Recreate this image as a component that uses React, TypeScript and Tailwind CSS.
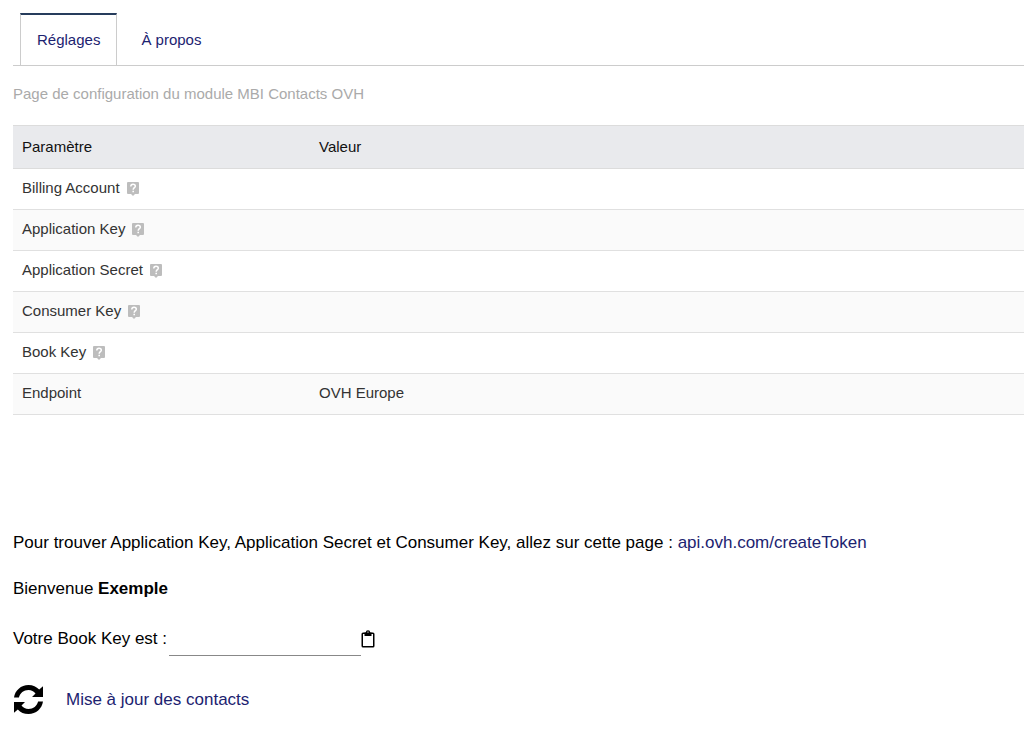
import React from "react";

interface Setting {
  label: string;
  help?: boolean;
  value?: string;
}

const settings: Setting[] = [
  { label: "Billing Account", help: true },
  { label: "Application Key", help: true },
  { label: "Application Secret", help: true },
  { label: "Consumer Key", help: true },
  { label: "Book Key", help: true },
  { label: "Endpoint", value: "OVH Europe" },
];

export default function App() {
  return (
    <div className="bg-white pt-[13px] pb-8 pl-[13px] font-['Liberation_Sans',Arial,sans-serif] text-black">
      <nav className="flex border-b border-[#ccc] pl-[7px] text-[15px] leading-5 text-[#1c2370]">
        <a
          href="#reglages"
          aria-current="page"
          className="border-x border-t-2 border-x-[#ccc] border-t-[#263c5c] px-4 pt-[15px] pb-[15px]"
        >
          Réglages
        </a>
        <a href="#apropos" className="px-6 pt-[17px] pb-[15px]">
          À propos
        </a>
      </nav>

      <p className="mt-[18px] text-[15px] leading-5 text-[#aaa]">
        Page de configuration du module MBI Contacts OVH
      </p>

      <table className="mt-[21px] w-full table-fixed border-collapse text-left text-[15px] leading-5 text-[#333]">
        <thead>
          <tr className="h-[43px] border-y border-[#dcdcdc] bg-[#e9eaed] text-[#111]">
            <th className="w-[296px] px-[9px] font-normal">Paramètre</th>
            <th className="px-[10px] font-normal">Valeur</th>
          </tr>
        </thead>
        <tbody>
          {settings.map((setting) => (
            <tr key={setting.label} className="h-[41px] border-b border-[#e0e0e0] even:bg-[#fafafa]">
              <td className="px-[9px] pb-[2px]">
                <span className="flex items-center gap-[7px]">
                  {setting.label}
                  {setting.help && <HelpIcon />}
                </span>
              </td>
              <td className="px-[10px] pb-[2px]">{setting.value}</td>
            </tr>
          ))}
        </tbody>
      </table>

      <section className="mt-[118px] text-[17px] leading-5">
        <p>
          Pour trouver Application Key, Application Secret et Consumer Key, allez sur cette page :{" "}
          <a href="https://api.ovh.com/createToken" className="text-[#1c2370]">
            api.ovh.com/createToken
          </a>
        </p>
        <p className="mt-[26px]">
          Bienvenue <b>Exemple</b>
        </p>
        <div className="mt-[23px] flex items-center">
          <label htmlFor="bookKey">Votre Book Key est :</label>
          <input
            id="bookKey"
            type="text"
            className="ml-[2px] h-[34px] w-48 border-b border-[#888] bg-transparent outline-none"
          />
          <button type="button" aria-label="Copier">
            <ClipboardIcon />
          </button>
        </div>
        <a href="#update" className="mt-7 flex w-fit items-center gap-[22px] text-[#1c2370]">
          <RefreshIcon />
          Mise à jour des contacts
        </a>
      </section>
    </div>
  );
}

const HelpIcon = () => {
  return (
    <svg
      xmlns="http://www.w3.org/2000/svg"
      width="12"
      height="14"
      viewBox="0 0 12 14"
      fill="none"
      className="mt-[2px]"
    >
      <path d="M1 0h10a1 1 0 0 1 1 1v10a1 1 0 0 1-1 1H8l-2 2-2-2H1a1 1 0 0 1-1-1V1a1 1 0 0 1 1-1z" fill="#bdbdbd" />
      <path d="M3.800 4.500C3.800 3 4.700 2.300 6 2.300s2.300.7 2.300 1.900C8.300 5.600 6.200 5.800 6.200 7.700" stroke="#fff" strokeWidth="1.500" />
      <path d="M5.400 8.700H7v1.600H5.400z" fill="#fff" />
    </svg>
  );
};

const ClipboardIcon = () => {
  return (
    <svg xmlns="http://www.w3.org/2000/svg" width="14" height="18" viewBox="0 0 14 18" fill="none">
      <rect x="1.250" y="3.250" width="11.500" height="13.500" rx="0.8" stroke="#000" strokeWidth="1.500" />
      <path
        fill="#000"
        fillRule="evenodd"
        d="M3.500 2.500h1.300a2.200 2.200 0 0 1 4.400 0h1.300V6h-7zM7 1.600a.8.800 0 1 0 0 1.600.8.800 0 0 0 0-1.600z"
      />
    </svg>
  );
};

const RefreshIcon = () => {
  return (
    <svg xmlns="http://www.w3.org/2000/svg" width="31" height="31" viewBox="0 0 31 31" fill="none">
      <path
        fill="#000"
        d="M1 13.500C2 6.500 8 1 15.500 1c4.400 0 8 1.700 10.700 4.600L30 2.300V13H19l3.500-3.500C20.700 7.300 18.500 6 15.500 6 10.700 6 7 9 5.900 13.500z"
      />
      <path
        fill="#000"
        d="M30 17.500C29 24.500 23 30 15.500 30c-4.400 0-8-1.700-10.700-4.600L1 28.700V18h11l-3.500 3.500C10.300 23.700 12.500 25 15.500 25c4.800 0 8.500-3 9.600-7.500z"
      />
    </svg>
  );
};
